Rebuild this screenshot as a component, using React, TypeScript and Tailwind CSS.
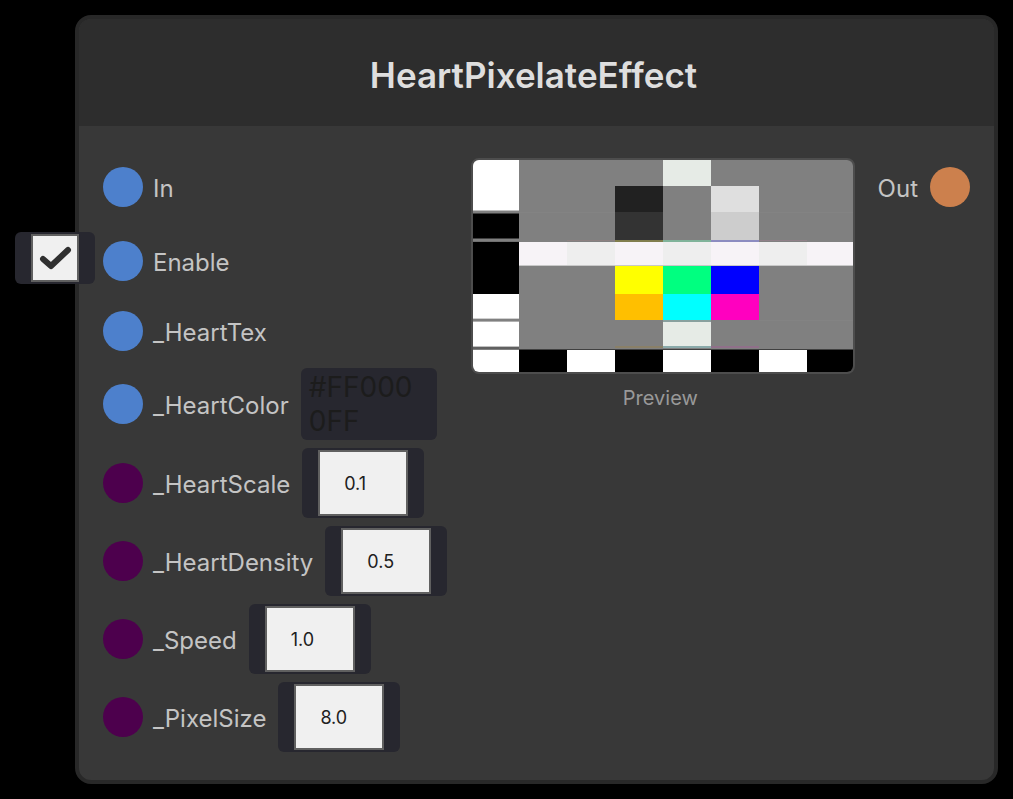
import React, { useState } from 'react';

type PortKind = 'texture' | 'float' | 'output';

interface PortProps {
  kind: PortKind;
}

interface NumberParam {
  id: string;
  label: string;
  value: string;
}

const portColors: Record<PortKind, string> = {
  texture: 'bg-[#4d80cc]',
  float: 'bg-[#4d004d]',
  output: 'bg-[#cc804d]',
};

const numberParams: NumberParam[] = [
  { id: 'heart-scale', label: '_HeartScale', value: '0.1' },
  { id: 'heart-density', label: '_HeartDensity', value: '0.5' },
  { id: 'speed', label: '_Speed', value: '1.0' },
  { id: 'pixel-size', label: '_PixelSize', value: '8.0' },
];

function Port({ kind }: PortProps) {
  return <span className={`size-10 shrink-0 rounded-full ${portColors[kind]}`} />;
}

function EnableToggle() {
  const [checked, setChecked] = useState(true);

  return (
    <div className="absolute top-1 right-full mr-2 rounded-md bg-[#27272f] px-4 py-0.5">
      <div className="relative size-12">
        <input
          id="enable"
          type="checkbox"
          checked={checked}
          onChange={(e) => setChecked(e.target.checked)}
          className="block size-12 appearance-none border-2 border-[#606060] bg-[#f0f0f0]"
        />
        {checked && (
          <svg
            viewBox="0 0 48 48"
            className="pointer-events-none absolute inset-0 size-12"
            fill="none"
            stroke="#303030"
            strokeWidth="6"
            strokeLinecap="round"
            strokeLinejoin="round"
          >
            <path d="M12 25 L20 32 L37 16" />
          </svg>
        )}
      </div>
    </div>
  );
}

function NumberField({ id, label, value }: NumberParam) {
  const [text, setText] = useState(value);

  return (
    <div className="flex items-center">
      <Port kind="float" />
      <label htmlFor={id} className="ml-2.5 pt-1">{label}</label>
      <div className="ml-3 rounded-md bg-[#27272f] px-4 py-0.5">
        <input
          id={id}
          type="text"
          inputMode="decimal"
          value={text}
          onChange={(e) => setText(e.target.value)}
          className="block h-[66px] w-[90px] border-2 border-[#606060] bg-[#f0f0f0] px-6 text-lg text-[#202020]"
        />
      </div>
    </div>
  );
}

// Test pattern sampled through the effect
function PreviewImage() {
  return (
    <svg viewBox="0 0 380 212" className="block w-full" role="img" aria-label="Preview">
      <rect width="380" height="212" fill="#808080" />

      {/* Left strip */}
      <rect width="46" height="50" fill="#ffffff" />
      <rect y="50" width="46" height="1" fill="#c0c0c0" />
      <rect y="53" width="46" height="1" fill="#404040" />
      <rect y="54" width="46" height="24" fill="#000000" />
      <rect y="78" width="46" height="1" fill="#404040" />
      <rect y="81" width="46" height="1" fill="#707070" />
      <rect y="82" width="46" height="52" fill="#000000" />
      <rect y="134" width="46" height="24" fill="#ffffff" />
      <rect y="158" width="46" height="1" fill="#d0d0d0" />
      <rect y="161" width="46" height="1" fill="#b0b0b0" />
      <rect y="162" width="46" height="24" fill="#ffffff" />
      <rect y="186" width="46" height="1" fill="#c0c0c0" />

      {/* Grey patches */}
      <rect x="190" width="48" height="26" fill="#e6ebe6" />
      <rect x="142" y="26" width="48" height="26" fill="#212121" />
      <rect x="142" y="52" width="48" height="28" fill="#333333" />
      <rect x="238" y="26" width="48" height="26" fill="#dfdfdf" />
      <rect x="238" y="52" width="48" height="28" fill="#cdcdcd" />
      <rect x="46" y="52" width="96" height="1" fill="#838383" />
      <rect x="286" y="52" width="94" height="1" fill="#838383" />

      {/* Fringes above the light band */}
      <rect x="94" y="80" width="48" height="1" fill="#8c8080" />
      <rect x="142" y="80" width="48" height="2" fill="#807d4d" />
      <rect x="190" y="80" width="48" height="2" fill="#80b39a" />
      <rect x="238" y="80" width="48" height="2" fill="#8c8cc0" />
      <rect x="286" y="80" width="48" height="1" fill="#908088" />

      {/* Light band */}
      <rect x="46" y="82" width="334" height="24" fill="#f7f3f7" />
      <rect x="94" y="82" width="48" height="24" fill="#eeeeee" />
      <rect x="190" y="82" width="48" height="24" fill="#eeeeee" />
      <rect x="286" y="82" width="48" height="24" fill="#eeeeee" />
      <rect x="46" y="105" width="334" height="1" fill="#c8c8c8" />

      {/* Colour bars */}
      <rect x="142" y="106" width="48" height="28" fill="#ffff00" />
      <rect x="190" y="106" width="48" height="28" fill="#00ff80" />
      <rect x="238" y="106" width="48" height="28" fill="#0000ff" />
      <rect x="142" y="134" width="48" height="26" fill="#ffbf00" />
      <rect x="190" y="134" width="48" height="26" fill="#00ffff" />
      <rect x="238" y="134" width="48" height="26" fill="#ff00bf" />
      <rect x="190" y="160" width="48" height="2" fill="#88a09e" />
      <rect x="286" y="160" width="94" height="1" fill="#838383" />
      <rect x="190" y="162" width="48" height="24" fill="#e6ebe6" />
      <rect x="142" y="186" width="48" height="2" fill="#8a8068" />
      <rect x="190" y="186" width="48" height="2" fill="#8aaaaa" />
      <rect x="238" y="186" width="48" height="2" fill="#90708a" />

      {/* Bottom checker strip */}
      <rect y="187" width="46" height="2" fill="#606060" />
      <rect x="46" y="189" width="334" height="1" fill="#404040" />
      <rect y="190" width="380" height="22" fill="#000000" />
      <rect y="190" width="46" height="22" fill="#ffffff" />
      <rect x="94" y="190" width="48" height="22" fill="#ffffff" />
      <rect x="190" y="190" width="48" height="22" fill="#ffffff" />
      <rect x="286" y="190" width="48" height="22" fill="#ffffff" />
    </svg>
  );
}

export default function App() {
  const [color, setColor] = useState('#FF0000FF');

  return (
    <div className="min-h-screen bg-black pt-[15px] pr-[15px] pb-[15px] pl-[75px] font-['Inter',sans-serif]">
      <section className="rounded-2xl border-4 border-[#282828] bg-[#383838]">
        {/* Title bar */}
        <header className="rounded-t-xl bg-[#2d2d2d] pt-9 pr-1.5 pb-[31px] text-center">
          <h1 className="text-[35px] leading-10 font-semibold text-[#dedede]">HeartPixelateEffect</h1>
        </header>

        <div className="flex items-start px-6 py-7 text-2xl text-[#c4c4c4]">
          {/* Inputs */}
          <div className="flex shrink-0 flex-col gap-2">
            <div className="flex h-[66px] items-center">
              <Port kind="texture" />
              <span className="ml-2.5 pt-1">In</span>
            </div>
            <div className="relative flex h-[66px] items-center">
              <EnableToggle />
              <Port kind="texture" />
              <label htmlFor="enable" className="ml-2.5 pt-1">Enable</label>
            </div>
            <div className="flex h-[58px] items-center">
              <Port kind="texture" />
              <span className="ml-2.5 pt-1">_HeartTex</span>
            </div>
            <div className="flex items-center">
              <Port kind="texture" />
              <label htmlFor="heart-color" className="ml-2.5 pt-1">_HeartColor</label>
              <textarea
                id="heart-color"
                rows={2}
                value={color}
                onChange={(e) => setColor(e.target.value)}
                spellCheck={false}
                className="ml-3 block w-[136px] resize-none overflow-hidden rounded-md bg-[#27272f] py-0.5 pr-4 pl-2 text-[28px] leading-[34px] break-all text-[#1c1c1c]"
              />
            </div>
            {numberParams.map((param) => (
              <NumberField key={param.id} {...param} />
            ))}
          </div>

          {/* Preview */}
          <figure className="mt-1 ml-6 w-96 shrink-0">
            <div className="overflow-hidden rounded-lg border-2 border-[#4d4d4d]">
              <PreviewImage />
            </div>
            <figcaption className="mt-2.5 pr-1.5 text-center text-xl text-[#999999]">Preview</figcaption>
          </figure>

          {/* Outputs */}
          <div className="ml-auto flex h-[66px] items-center">
            <span className="mr-3 pt-1">Out</span>
            <Port kind="output" />
          </div>
        </div>
      </section>
    </div>
  );
}
